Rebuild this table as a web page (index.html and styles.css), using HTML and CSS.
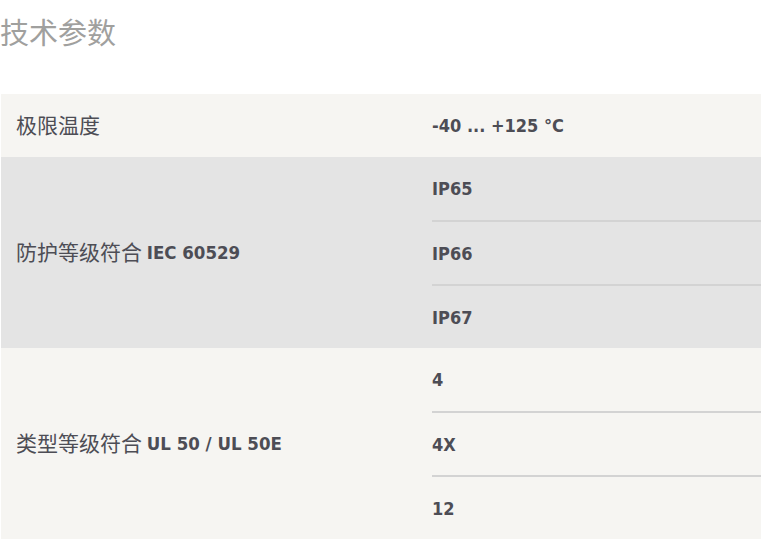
FILE: index.html
```html
<!DOCTYPE html>
<html lang="zh">
<head>
<meta charset="utf-8">
<link rel="stylesheet" href="styles.css">
</head>
<body>
<h2 class="title">技术参数</h2>
<div class="specs">
  <div class="row light">
    <div class="label">极限温度</div>
    <div class="values">
      <div class="value">-40 ... +125 °C</div>
    </div>
  </div>
  <div class="row gray">
    <div class="label">防护等级符合 <b>IEC 60529</b></div>
    <div class="values">
      <div class="value">IP65</div>
      <div class="value">IP66</div>
      <div class="value">IP67</div>
    </div>
  </div>
  <div class="row light">
    <div class="label">类型等级符合 <b>UL 50 / UL 50E</b></div>
    <div class="values">
      <div class="value">4</div>
      <div class="value">4X</div>
      <div class="value">12</div>
    </div>
  </div>
</div>
</body>
</html>
```
FILE: styles.css
```css
html, body {
  margin: 0;
  padding: 0;
  background: #ffffff;
}
body {
  font-family: "Noto Sans CJK SC", sans-serif;
  color: #4d4d55;
}
.title {
  margin: 0;
  padding-top: 13px;
  height: 80px;
  box-sizing: border-box;
  font-size: 29px;
  font-weight: 400;
  line-height: 36px;
  color: #a0a09e;
}
.specs {
  display: flex;
  flex-direction: column;
  margin-left: 1px;
  margin-top: 14px;
}
.row {
  display: flex;
}
.row.light { background: #f6f5f2; }
.row.gray { background: #e4e4e4; }
.label {
  width: 431px;
  padding-left: 15px;
  padding-bottom: 4px;
  box-sizing: border-box;
  display: flex;
  align-items: center;
  font-size: 21px;
  white-space: pre;
}
.label b {
  font-size: 18.5px;
  position: relative;
  top: 2px;
}
.label b, .value {
  font-family: "DejaVu Sans Condensed", "DejaVu Sans", sans-serif;
  font-stretch: condensed;
  font-weight: 700;
}
.values {
  flex: 1;
  display: flex;
  flex-direction: column;
}
.value {
  height: 63px;
  display: flex;
  align-items: center;
  font-size: 18px;
  color: #4d4d55;
}
.value + .value {
  height: 64px;
  border-top: 2px solid #d3d3d3;
  box-sizing: border-box;
}
```
